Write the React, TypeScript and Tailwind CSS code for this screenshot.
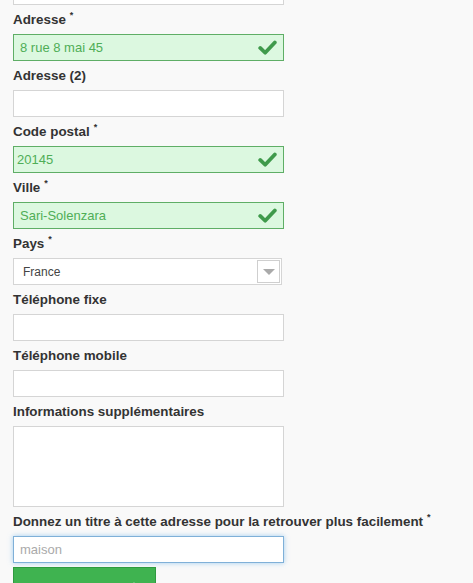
import { ChevronRight } from "lucide-react";

function Label({ text, required }: { text: string; required?: boolean }) {
  return (
    <div className="flex h-[29px] items-center pt-[1px] text-[13.4px] font-bold text-[#333]">
      <span>{text}</span>
      {required ? <span className="ml-[4px] -mt-[8px] text-[9px] font-bold">*</span> : null}
    </div>
  );
}

function Check() {
  return (
    <svg viewBox="0 0 20 16" className="h-[15px] w-[19px]" aria-hidden>
      <path d="M2.2 8.5 L7.5 13.6 L17.8 2.6" fill="none" stroke="#3f9a4b" strokeWidth="4" strokeLinecap="round" strokeLinejoin="round" />
    </svg>
  );
}

function ValidInput({ value, pad = "pl-[6px]" }: { value: string; pad?: string }) {
  return (
    <div className="flex h-[27px] w-[271px] items-center justify-between border border-[#5fae66] bg-[#dcf8e0] pr-[6px]">
      <span className={`${pad} text-[13px] text-[#4fae57]`}>{value}</span>
      <Check />
    </div>
  );
}

function EmptyInput() {
  return <div className="h-[27px] w-[271px] border border-[#d5d5d5] bg-white" />;
}

export default function App() {
  return (
    <div className="h-[583px] overflow-hidden bg-[#f9f9f9] pl-[13px] font-['Liberation_Sans',Arial,sans-serif]">
      <div className="-mt-[22px]">
        <EmptyInput />
      </div>

      <Label text="Adresse" required />
      <ValidInput value="8 rue 8 mai 45" />

      <Label text="Adresse (2)" />
      <EmptyInput />

      <Label text="Code postal" required />
      <ValidInput value="20145" pad="pl-[3px]" />

      <Label text="Ville" required />
      <ValidInput value="Sari-Solenzara" />

      <Label text="Pays" required />
      <div className="flex h-[27px] w-[269px] items-center justify-between border border-[#d5d5d5] bg-white pr-[1px]">
        <span className="pl-[9px] text-[12px] text-[#444]">France</span>
        <div className="flex h-[23px] w-[23px] items-center justify-center border border-[#cfcfcf] bg-white">
          <div className="h-0 w-0 border-x-[6px] border-t-[6px] border-x-transparent border-t-[#aaa]" />
        </div>
      </div>

      <Label text="Téléphone fixe" />
      <EmptyInput />

      <Label text="Téléphone mobile" />
      <EmptyInput />

      <Label text="Informations supplémentaires" />
      <div className="h-[81px] w-[271px] border border-[#d5d5d5] bg-white" />

      <Label text="Donnez un titre à cette adresse pour la retrouver plus facilement" required />
      <div className="flex h-[27px] w-[271px] items-center border border-[#7fb0d8] bg-white shadow-[0_0_5px_rgba(102,175,233,0.6)]">
        <span className="pl-[6px] text-[13px] text-[#aaa]">maison</span>
      </div>

      <div className="mt-[4px] flex h-[40px] w-[143px] items-start justify-end border border-[#2f9a40] bg-[#3fb350] pr-[12px] pt-[9px]">
        <ChevronRight className="h-[18px] w-[18px] -rotate-90 text-white" strokeWidth={3} />
      </div>
    </div>
  );
}
